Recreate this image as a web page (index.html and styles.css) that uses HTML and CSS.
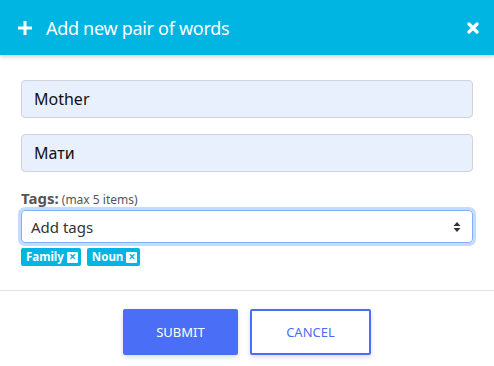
FILE: index.html
```html
<!DOCTYPE html>
<html lang="en">
<head>
<meta charset="utf-8">
<link rel="stylesheet" href="styles.css">
</head>
<body>
<div class="modal">
  <header class="modal-header">
    <svg class="plus" width="14" height="14" viewBox="0 0 14 14"><path d="M5.5 0h3v5.5H14v3H8.5V14h-3V8.5H0v-3h5.5z" fill="#fff"/></svg>
    <h1 class="title">Add new pair of words</h1>
    <svg class="close" width="12" height="12" viewBox="0 0 12 12"><path d="M2 2L10 10M10 2L2 10" stroke="#fff" stroke-width="3.2" stroke-linecap="round"/></svg>
  </header>
  <div class="modal-body">
    <div class="field">Mother</div>
    <div class="field">Мати</div>
    <div class="tags-label"><b>Tags:</b> <span class="hint">(max 5 items)</span></div>
    <div class="select">
      <span>Add tags</span>
      <svg width="8" height="12" viewBox="0 0 8 12"><path d="M4 1L7.5 5H0.5z M4 11L0.5 7H7.5z" fill="#333"/></svg>
    </div>
    <div class="chips">
      <span class="chip">Family <span class="chip-x">×</span></span>
      <span class="chip">Noun <span class="chip-x">×</span></span>
    </div>
  </div>
  <footer class="modal-footer">
    <button class="btn btn-primary">SUBMIT</button>
    <button class="btn btn-outline">CANCEL</button>
  </footer>
</div>
</body>
</html>
```
FILE: styles.css
```css
* { box-sizing: border-box; }
html, body { margin: 0; padding: 0; background: #fff; }
body { font-family: "Noto Sans", sans-serif; color: #222; }
.modal { width: 494px; height: 366px; background: #fff; }
.modal-header {
  height: 55px;
  background: #00b5e2;
  display: flex;
  align-items: center;
  padding: 0 15px 0 18px;
  box-shadow: 0 2px 4px rgba(0,0,0,0.18);
  position: relative;
}
.plus { flex: none; margin-right: 14px; }
.title {
  margin: 0;
  font-size: 18px;
  font-weight: 400;
  color: #fff;
  flex: 1;
  letter-spacing: -0.3px;
}
.close { flex: none; }
.modal-body { padding: 25px 21px 0 21px; }
.field {
  height: 38px;
  background: #e8f0fe;
  border: 1px solid #d0d4da;
  border-radius: 4px;
  padding: 0 12px;
  display: flex;
  align-items: center;
  font-size: 16px;
  color: #111;
  margin-bottom: 16px;
}
.tags-label { font-size: 12px; color: #555; margin-top: 2px; height: 20px; line-height: 20px; }
.tags-label b { font-size: 15px; color: #555; }
.select {
  margin-top: 2px;
  height: 33px;
  border: 1px solid #7fb0ff;
  border-radius: 4px;
  box-shadow: 0 0 0 3px #c4dbff;
  display: flex;
  align-items: center;
  justify-content: space-between;
  padding: 0 11px 0 9px;
  font-size: 15px;
  color: #333;
}
.chips { display: flex; gap: 6px; margin-top: 5px; }
.chip {
  background: #00b5e2;
  color: #fff;
  font-size: 11.5px;
  font-weight: 700;
  height: 18px;
  line-height: 18px;
  padding: 0 3px 0 5px;
  border-radius: 2px;
  display: inline-flex;
  align-items: center;
  gap: 3px;
}
.chip-x {
  display: inline-block;
  width: 11px; height: 11px;
  background: #fff;
  color: #00b5e2;
  font-size: 12px;
  line-height: 10px;
  text-align: center;
  border-radius: 1px;
}
.modal-footer {
  margin-top: 24px;
  border-top: 1px solid #e2e2e2;
  display: flex;
  justify-content: center;
  gap: 12px;
  padding-top: 18px;
}
.btn {
  height: 46px;
  font-family: "Noto Sans", sans-serif;
  font-size: 13px;
  border-radius: 2px;
  cursor: pointer;
  box-shadow: 0 2px 5px rgba(0,0,0,0.15);
}
.btn-primary { width: 115px; background: #4a6ef5; border: none; color: #fff; }
.btn-outline { width: 121px; background: #fff; border: 2px solid #4a6ef5; color: #4a6ef5; }
```
